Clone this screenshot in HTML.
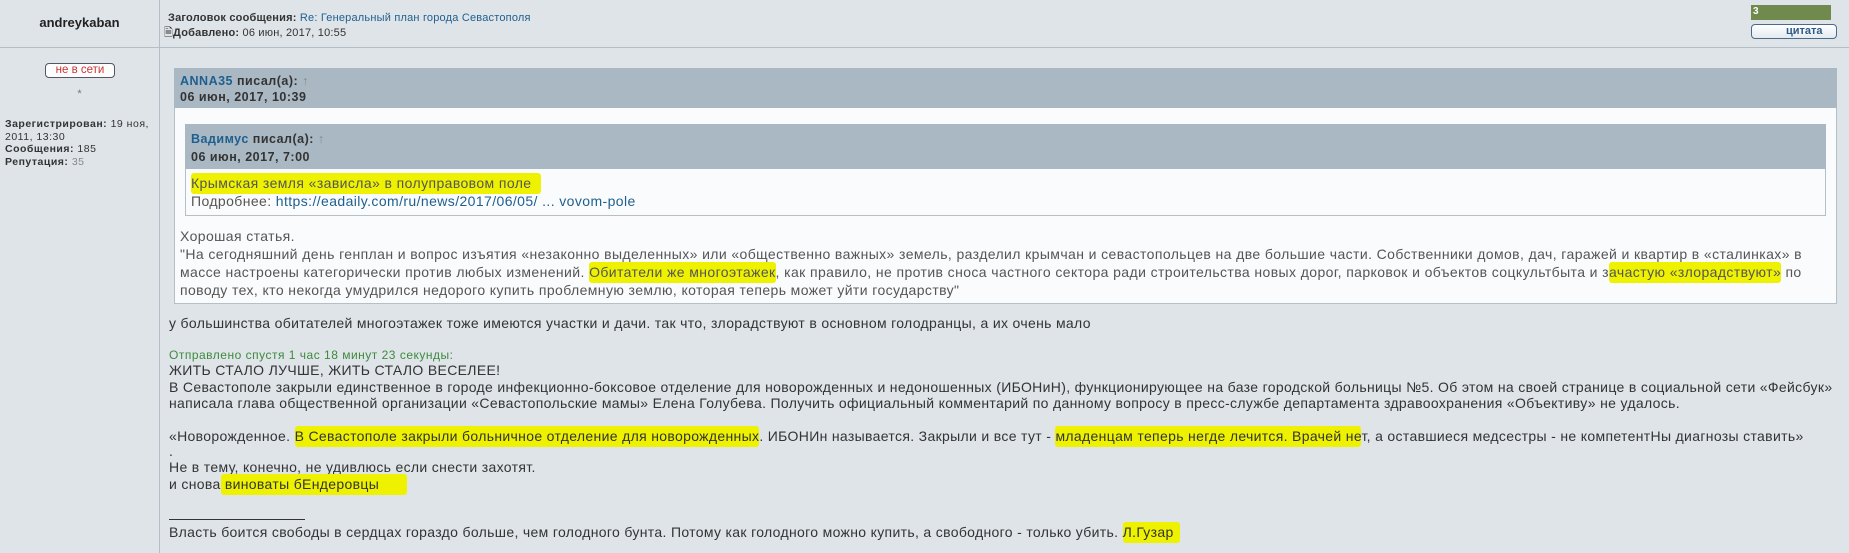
<!DOCTYPE html>
<html><head><meta charset="utf-8"><style>
*{margin:0;padding:0;box-sizing:border-box}
body{width:1849px;height:553px;overflow:hidden;background:#dfe4e8;font-family:"Liberation Sans","DejaVu Sans",sans-serif;position:relative;color:#333}
.a{position:absolute;white-space:nowrap}
.t{font-size:14px;letter-spacing:0.33px;color:#333}
.q{font-size:14px;letter-spacing:0.4px;color:#555}
.h{background:#eef200;padding:2px 0 3px;border-radius:3px}
.b{font-weight:bold}
.lk{color:#1f5f8f}
</style></head><body>
<div class="a" style="left:159px;top:0;width:1px;height:553px;background:#b4bec6"></div>
<div class="a" style="left:0;top:47px;width:1849px;height:1px;background:#b4bec6"></div>
<div class="a b" style="left:0;width:159px;top:15px;text-align:center;font-size:13px;color:#222">andreykaban</div>
<div class="a" style="left:168px;top:12px;font-size:11px;letter-spacing:0.2px;color:#333"><span class="b">Заголовок сообщения:</span> <span class="lk">Re: Генеральный план города Севастополя</span></div>
<div class="a" style="left:164px;top:24px;font-size:11px;letter-spacing:0.2px;color:#333">&#128462;<span class="b">Добавлено:</span> 06 июн, 2017, 10:55</div>
<div class="a" style="left:1751px;top:5px;width:80px;height:15px;background:#6f8a4c;color:#fff;font-size:10px;font-weight:bold;padding-left:2px;line-height:13px">3</div>
<div class="a" style="left:1751px;top:24px;width:86px;height:15px;border:1px solid #4c6a86;border-radius:4px;background:linear-gradient(#fff,#e4eaf0);font-size:11px;font-weight:bold;color:#2d5a86;line-height:13px;padding-left:34px">цитата</div>
<div class="a" style="left:45px;top:63px;width:70px;height:15px;border:1px solid #556;border-radius:4px;background:#fdfdfd;color:#c33;font-size:11.5px;text-align:center;line-height:13px">не в сети</div>
<div class="a" style="left:0;width:159px;top:88px;text-align:center;font-size:11px;color:#777">*</div>
<div class="a" style="left:5px;top:118px;font-size:10.5px;letter-spacing:0.5px;line-height:12.5px;color:#333"><span class="b">Зарегистрирован:</span> 19 ноя,<br>2011, 13:30<br><span class="b">Сообщения:</span> 185<br><span class="b">Репутация:</span> <span style="color:#888">35</span></div>
<div class="a" style="left:174px;top:68px;width:1663px;height:236px;background:#fafbfc;border:1px solid #b5bfc7"></div>
<div class="a" style="left:174px;top:68px;width:1663px;height:40px;background:#aab8c3"></div>
<div class="a" style="left:180px;top:73px;font-size:12.5px;letter-spacing:0.5px;line-height:16px;color:#333"><span class="b lk">ANNA35</span> <span class="b">писал(а):</span> <span style="color:#888">↑</span><br><span class="b">06 июн, 2017, 10:39</span></div>
<div class="a" style="left:185px;top:124px;width:1641px;height:92px;background:#fafbfc;border:1px solid #b5bfc7"></div>
<div class="a" style="left:185px;top:124px;width:1641px;height:45px;background:#aab8c3"></div>
<div class="a" style="left:191px;top:130px;font-size:12.5px;letter-spacing:0.5px;line-height:18px;color:#333"><span class="b lk">Вадимус</span> <span class="b">писал(а):</span> <span style="color:#888">↑</span><br><span class="b">06 июн, 2017, 7:00</span></div>
<div class="a q" style="left:191px;top:175px"><span class="h" style="padding-right:10px">Крымская земля «зависла» в полуправовом поле</span></div>
<div class="a q" style="left:191px;top:193px">Подробнее: <span class="lk">https://eadaily.com/ru/news/2017/06/05/ ... vovom-pole</span></div>
<div class="a q" style="left:180px;top:228px">Хорошая статья.</div>
<div class="a q" style="left:180px;top:246px">"На сегодняшний день генплан и вопрос изъятия «незаконно выделенных» или «общественно важных» земель, разделил крымчан и севастопольцев на две большие части. Собственники домов, дач, гаражей и квартир в «сталинках» в</div>
<div class="a q" style="left:180px;top:264px">массе настроены категорически против любых изменений. <span class="h">Обитатели же многоэтажек</span>, как правило, не против сноса частного сектора ради строительства новых дорог, парковок и объектов соцкультбыта и з<span class="h">ачастую «злорадствуют»</span> по</div>
<div class="a q" style="left:180px;top:282px">поводу тех, кто некогда умудрился недорого купить проблемную землю, которая теперь может уйти государству"</div>
<div class="a t" style="left:169px;top:315px">у большинства обитателей многоэтажек тоже имеются участки и дачи. так что, злорадствуют в основном голодранцы, а их очень мало</div>
<div class="a" style="left:169px;top:348px;font-size:12px;letter-spacing:0.5px;color:#3d8a3d">Отправлено спустя 1 час 18 минут 23 секунды:</div>
<div class="a t" style="left:169px;top:362px">ЖИТЬ СТАЛО ЛУЧШЕ, ЖИТЬ СТАЛО ВЕСЕЛЕЕ!</div>
<div class="a t" style="left:169px;top:379px">В Севастополе закрыли единственное в городе инфекционно-боксовое отделение для новорожденных и недоношенных (ИБОНиН), функционирующее на базе городской больницы №5. Об этом на своей странице в социальной сети «Фейсбук»</div>
<div class="a t" style="left:169px;top:395px">написала глава общественной организации «Севастопольские мамы» Елена Голубева. Получить официальный комментарий по данному вопросу в пресс-службе департамента здравоохранения «Объективу» не удалось.</div>
<div class="a t" style="left:169px;top:428px">«Новорожденное. <span class="h">В Севастополе закрыли больничное отделение для новорожденных</span>. ИБОНИн называется. Закрыли и все тут - <span class="h">младенцам теперь негде лечится. Врачей не</span>т, а оставшиеся медсестры - не компетентНы диагнозы ставить»</div>
<div class="a t" style="left:169px;top:443px">.</div>
<div class="a t" style="left:169px;top:459px">Не в тему, конечно, не удивлюсь если снести захотят.</div>
<div class="a t" style="left:169px;top:476px">и снова<span class="h" style="padding-right:28px"> виноваты бЕндеровцы</span></div>
<div class="a" style="left:169px;top:519px;width:136px;height:1px;background:#333"></div>
<div class="a t" style="left:169px;top:524px">Власть боится свободы в сердцах гораздо больше, чем голодного бунта. Потому как голодного можно купить, а свободного - только убить. <span class="h" style="padding-right:6px">Л.Гузар</span></div>
</body></html>
